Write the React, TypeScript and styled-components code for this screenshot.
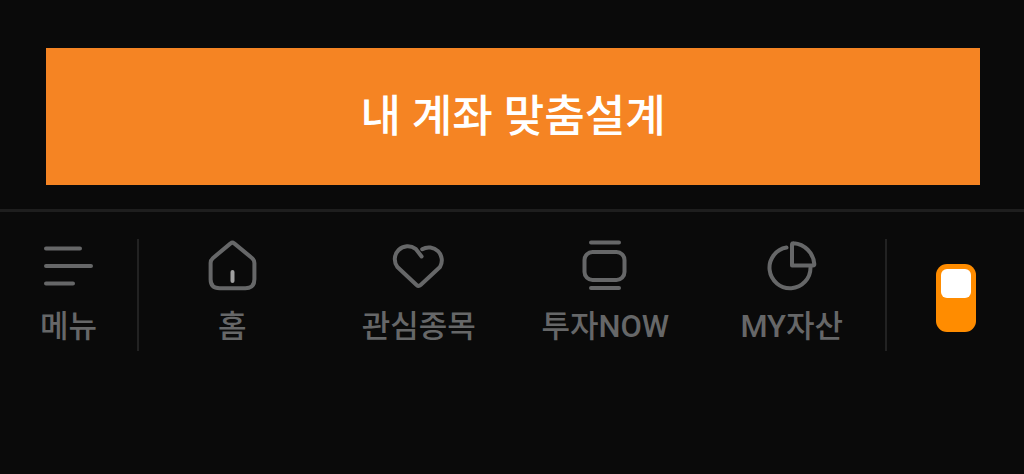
import React, { useState } from "react";
import styled, { createGlobalStyle } from "styled-components";

const GlobalStyle = createGlobalStyle`
  * {
    box-sizing: border-box;
  }
  body {
    margin: 0;
    background: #0a0a0a;
    font-family: Roboto, "Noto Sans CJK KR", sans-serif;
  }
`;

const Page = styled.main`
  min-height: 100vh;
  padding-top: 48px;
  background: #0a0a0a;
`;

const ActionArea = styled.section`
  display: flex;
  padding: 0 44px 24px 46px;
`;

const ActionButton = styled.button`
  flex: 1;
  padding: 37px 16px 36px;
  border: 0;
  background: #f58423;
  color: #ffffff;
  font-family: inherit;
  font-size: 44px;
  font-weight: 500;
  line-height: 64px;
  cursor: pointer;
`;

const BottomBar = styled.nav`
  display: flex;
  align-items: flex-start;
  padding-top: 27px;
  border-top: 3px solid #1e1e1e;
`;

const MenuCell = styled.div`
  display: flex;
  flex: 0 0 139px;
  height: 112px;
  border-right: 2px solid #222222;
`;

const ToggleCell = styled.div`
  display: flex;
  flex: 0 0 139px;
  justify-content: center;
  align-items: center;
  height: 112px;
  padding-top: 6px;
  border-left: 2px solid #222222;
`;

const TabList = styled.div`
  display: flex;
  flex: 1;
`;

const itemStyles = `
  display: flex;
  flex: 1 1 0;
  flex-direction: column;
  align-items: center;
  gap: 8px;
  padding: 0;
  border: 0;
  background: none;
  color: #666768;
  font-family: inherit;
  font-size: 31px;
  font-weight: 500;
  line-height: 48px;
  text-decoration: none;
  white-space: nowrap;
  cursor: pointer;
`;

const MenuButton = styled.button`
  ${itemStyles}
`;

const TabLink = styled.a`
  ${itemStyles}
`;

const Icon = styled.svg`
  display: block;
  width: 56px;
  height: 56px;
  fill: none;
  stroke: currentColor;
  stroke-width: 4;
  stroke-linecap: round;
  stroke-linejoin: round;
`;

const ModeSwitch = styled.input`
  appearance: none;
  display: flex;
  width: 40px;
  height: 68px;
  margin: 0;
  padding: 5px;
  border-radius: 11px;
  background: #ff8c00;
  cursor: pointer;

  &::before {
    content: "";
    width: 30px;
    height: 29px;
    border-radius: 6px;
    background: #ffffff;
  }

  &:checked {
    align-items: flex-end;
  }
`;

const tabs = [
  {
    label: "홈",
    icon: (
      <>
        <path d="M26.6 4.4Q28.4 2.8 30.2 4.4L48.2 19.2Q50.4 21.1 50.4 24V40.3Q50.4 49.3 41.4 49.3H15.6Q6.6 49.3 6.6 40.3V24Q6.6 21.1 8.8 19.2Z" />
        <path d="M28.5 33V42" stroke="#a0a0a0" />
      </>
    ),
  },
  {
    label: "관심종목",
    icon: (
      <path d="M30.6 17.4L24.6 9.8A13 13 0 0 0 6.4 28L25.6 46Q27.6 47.8 29.6 46L49 28A13 13 0 0 0 31.2 10.2" />
    ),
  },
  {
    label: "투자NOW",
    icon: (
      <>
        <path d="M14 3.5H42M14 49H42" />
        <rect x="7.5" y="13" width="40" height="28" rx="8" />
      </>
    ),
  },
  {
    label: "MY자산",
    icon: (
      <>
        <path d="M22.5 8.5A20.5 20.5 0 1 0 46.5 28.5" />
        <path d="M28 5.5Q28 4 29.7 4.2C40.5 5 49.5 14 50.3 25Q50.4 26.5 49 26.5H28Z" />
      </>
    ),
  },
];

export default function App() {
  const [on, setOn] = useState(false);

  return (
    <>
      <GlobalStyle />
      <Page>
        <ActionArea>
          <ActionButton type="button">내 계좌 맞춤설계</ActionButton>
        </ActionArea>
        <BottomBar>
          <MenuCell>
            <MenuButton type="button">
              <Icon viewBox="0 0 56 56" aria-hidden="true">
                <path d="M5 9.5H39M5 27H50M5 44.5H32" />
              </Icon>
              메뉴
            </MenuButton>
          </MenuCell>
          <TabList>
            {tabs.map((tab) => (
              <TabLink key={tab.label} href="#">
                <Icon viewBox="0 0 56 56" aria-hidden="true">
                  {tab.icon}
                </Icon>
                {tab.label}
              </TabLink>
            ))}
          </TabList>
          <ToggleCell>
            <ModeSwitch
              type="checkbox"
              role="switch"
              aria-label="모드 전환"
              checked={on}
              onChange={(event) => setOn(event.target.checked)}
            />
          </ToggleCell>
        </BottomBar>
      </Page>
    </>
  );
}
